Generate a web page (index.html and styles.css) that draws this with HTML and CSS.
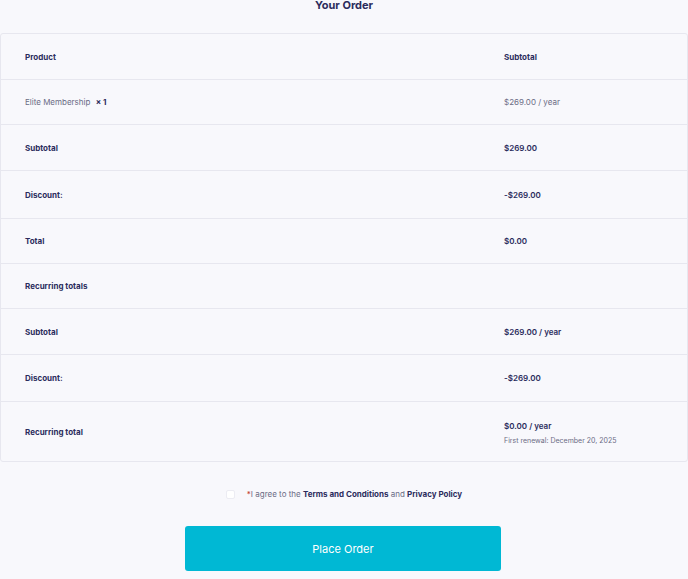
FILE: index.html
```html
<!DOCTYPE html>
<html>
	<head>
		<meta charset="utf-8">
		<title>Your Order</title>
		<link rel="stylesheet" href="styles.css">
	</head>
	<body>
		<div class="order">
			<h3 class="order-title">Your Order</h3>
			<table class="order-table">
				<thead>
					<tr>
						<th class="col-name">Product</th>
						<th>Subtotal</th>
					</tr>
				</thead>
				<tbody>
					<tr class="short">
						<td class="col-name">Elite Membership <strong class="qty">&times;&nbsp;1</strong></td>
						<td>$269.00 / year</td>
					</tr>
					<tr>
						<th class="col-name">Subtotal</th>
						<td class="strong">$269.00</td>
					</tr>
					<tr class="taller">
						<th class="col-name">Discount:</th>
						<td class="strong">-$269.00</td>
					</tr>
					<tr class="short">
						<th class="col-name">Total</th>
						<td class="strong">$0.00</td>
					</tr>
					<tr class="short">
						<th class="col-name" colspan="2">Recurring totals</th>
					</tr>
					<tr>
						<th class="col-name">Subtotal</th>
						<td class="strong">$269.00 / year</td>
					</tr>
					<tr class="tall">
						<th class="col-name">Discount:</th>
						<td class="strong">-$269.00</td>
					</tr>
					<tr class="renewal">
						<th class="col-name">Recurring total</th>
						<td>
							<div class="strong">$0.00 / year</div>
							<div class="note">First renewal: December 20, 2025</div>
						</td>
					</tr>
				</tbody>
			</table>
			<div class="terms">
				<span class="check"></span>
				<label><span class="req">*</span>I agree to the <b>Terms and Conditions</b> and <b>Privacy Policy</b></label>
			</div>
			<div class="actions">
				<button class="place-order" type="button">Place Order</button>
			</div>
		</div>
	</body>
</html>
```

FILE: styles.css
```css
*{
	margin: 0;
	padding: 0;
	box-sizing: border-box;
}
body{
	background: #f8f8fc;
	font-family: Inter, "Noto Sans", sans-serif;
	color: #2b2c5c;
}
.order-title{
	text-align: center;
	font-size: 11px;
	font-weight: 700;
	line-height: 11px;
	height: 33px;
}
.order-table{
	width: 100%;
	border-collapse: separate;
	border-spacing: 0;
	border: 1px solid #e7e7ef;
	border-radius: 3px;
	font-size: 8px;
	table-layout: fixed;
}
.order-table th,
.order-table td{
	text-align: left;
	padding: 0 24px;
	height: 46px;
	border-bottom: 1px solid #e7e7ef;
	vertical-align: middle;
}
.order-table tbody tr:last-child th,
.order-table tbody tr:last-child td{
	border-bottom: none;
}
.order-table th{
	font-weight: 700;
}
.order-table .col-name{
	width: 479px;
}
.order-table td{
	color: #6b6c85;
}
.order-table td.strong,
.order-table .strong{
	color: #2b2c5c;
	font-weight: 600;
}
.qty{
	color: #2b2c5c;
	margin-left: 3px;
}
.short th,
.short td{
	height: 45px;
}
.tall th,
.tall td{
	height: 47px;
}
.taller th,
.taller td{
	height: 48px;
}
.renewal th,
.renewal td{
	height: 59px;
}
.renewal .strong{
	margin-top: 2px;
}
.note{
	font-size: 7px;
	margin-top: 5px;
}
.terms{
	display: flex;
	justify-content: center;
	align-items: center;
	gap: 12px;
	margin-top: 27px;
	font-size: 8px;
	color: #6b6c85;
}
.terms b{
	color: #2b2c5c;
}
.req{
	color: #c0392b;
}
.check{
	width: 9px;
	height: 9px;
	background: #fff;
	border: 1px solid #ececf3;
	border-radius: 2px;
}
.actions{
	display: flex;
	justify-content: center;
	margin-top: 27px;
}
.place-order{
	width: 316px;
	height: 45px;
	margin-left: -2px;
	background: #00b8d4;
	color: #fff;
	border: none;
	border-radius: 3px;
	font-family: Inter, "Noto Sans", sans-serif;
	font-size: 11px;
}
```
